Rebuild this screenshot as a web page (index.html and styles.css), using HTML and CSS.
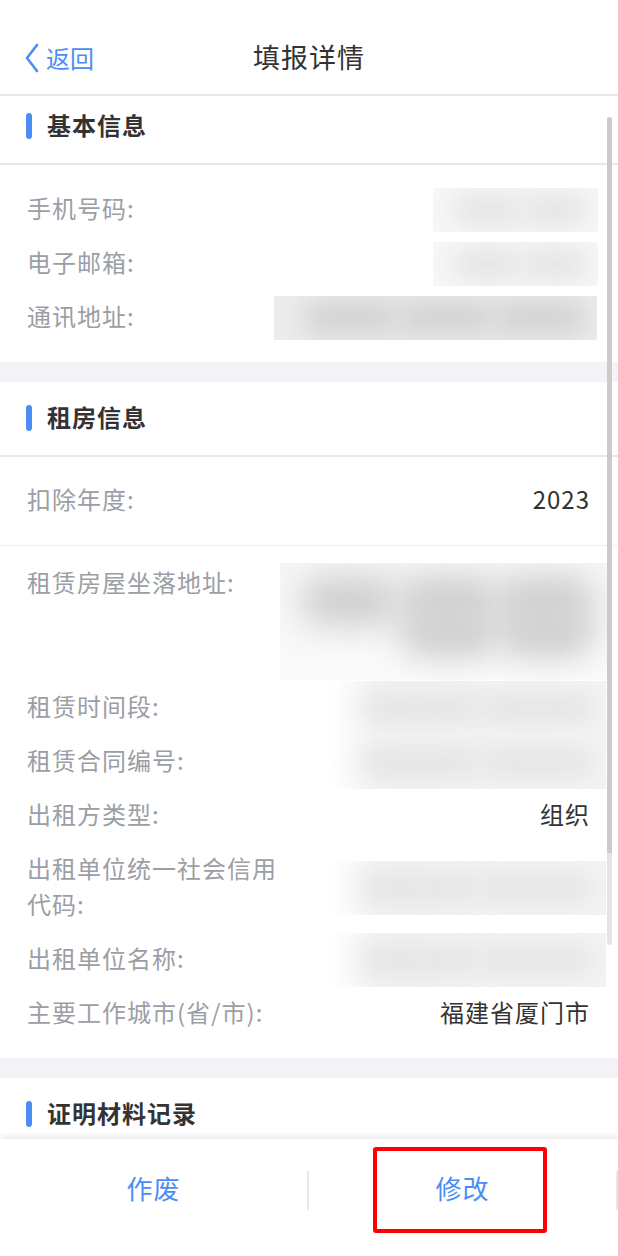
FILE: index.html
```html
<!DOCTYPE html>
<html lang="zh-CN">
  <head>
    <meta charset="UTF-8" />
    <meta name="viewport" content="width=device-width, initial-scale=1.0" />
    <title>填报详情</title>
    <link rel="stylesheet" href="styles.css">
  </head>
  <body>
    <header class="nav">
      <a href="#" class="back">
        <svg class="chevron" width="16" height="30" viewBox="0 0 16 30">
          <path d="M13 2 L3 15 L13 28" fill="none" stroke="#4b8df5" stroke-width="2.6" stroke-linecap="round" stroke-linejoin="round" />
        </svg>
        <span>返回</span>
      </a>
      <h1 class="nav-title">填报详情</h1>
    </header>

    <main class="content">
      <div class="scroll-inner">
        <section class="card">
          <div class="card-head"><span class="bar"></span>基本信息</div>
          <div class="card-body basic">
            <div class="row">
              <span class="label">手机号码:</span>
              <div class="mask short"><i></i><i></i></div>
            </div>
            <div class="row">
              <span class="label">电子邮箱:</span>
              <div class="mask short"><i></i><i></i></div>
            </div>
            <div class="row">
              <span class="label">通讯地址:</span>
              <div class="mask long"><i></i><i></i><i></i></div>
            </div>
          </div>
        </section>

        <div class="gap"></div>

        <section class="card">
          <div class="card-head"><span class="bar"></span>租房信息</div>
          <div class="row year-row">
            <span class="label">扣除年度:</span>
            <span class="value">2023</span>
          </div>
          <div class="card-body rent">
            <div class="row">
              <span class="label">租赁房屋坐落地址:</span>
              <div class="mask big">
                <div class="line"><i></i><i></i><i></i></div>
                <div class="line second"><i></i><i></i></div>
              </div>
            </div>
            <div class="row">
              <span class="label">租赁时间段:</span>
              <div class="mask wide"><i></i><i></i></div>
            </div>
            <div class="row">
              <span class="label">租赁合同编号:</span>
              <div class="mask wide"><i></i><i></i></div>
            </div>
            <div class="row">
              <span class="label">出租方类型:</span>
              <span class="value">组织</span>
            </div>
            <div class="row">
              <span class="label">出租单位统一社会信用代码:</span>
              <div class="mask wide"><i></i><i></i></div>
            </div>
            <div class="row">
              <span class="label">出租单位名称:</span>
              <div class="mask wide"><i></i><i></i></div>
            </div>
            <div class="row">
              <span class="label">主要工作城市(省/市):</span>
              <span class="value">福建省厦门市</span>
            </div>
          </div>
        </section>

        <div class="gap"></div>

        <section class="card">
          <div class="card-head"><span class="bar"></span>证明材料记录</div>
        </section>
      </div>
      <div class="scrollbar"></div>
    </main>

    <footer class="actions">
      <button class="action">作废</button>
      <span class="sep"></span>
      <button class="action">修改</button>
      <span class="sep"></span>
      <div class="highlight"></div>
    </footer>
  </body>
</html>
```

FILE: styles.css
```css
* {
  box-sizing: border-box;
}

body {
  font-family: 'Noto Sans CJK SC', 'Noto Sans', sans-serif;
  background-color: #fff;
  margin: 0;
  padding: 0;
  width: 618px;
  height: 1256px;
  display: flex;
  flex-direction: column;
  overflow: hidden;
}

.nav {
  position: relative;
  height: 96px;
  padding-top: 39px;
  border-bottom: 2px solid #e6e7eb;
  display: flex;
  justify-content: center;
  flex-shrink: 0;
}

.back {
  position: absolute;
  left: 24px;
  top: 43px;
  display: flex;
  align-items: center;
  gap: 6px;
  color: #4b8df5;
  font-size: 24px;
  line-height: 28px;
  text-decoration: none;
}

.nav-title {
  margin: 0;
  font-size: 27px;
  line-height: 36px;
  font-weight: 400;
  letter-spacing: 1px;
  color: #333;
}

.content {
  position: relative;
  flex: 1;
  overflow: hidden;
}

.scroll-inner {
  margin-top: -6px;
}

.card-head {
  display: flex;
  align-items: center;
  height: 75px;
  padding: 0 0 4px 26px;
  border-bottom: 2px solid #e6e7eb;
  font-size: 24px;
  font-weight: 700;
  letter-spacing: 1px;
  color: #333;
}

.bar {
  width: 6px;
  height: 26px;
  border-radius: 3px;
  background-color: #4b8df5;
  margin: 2px 15px 0 0;
}

.card-body.basic {
  padding: 18px 0 17px;
}

.card-body.rent {
  padding: 11px 0 17px;
}

.row {
  display: flex;
  align-items: center;
  min-height: 54px;
  padding: 0 28px 0 27px;
}

.label {
  flex: 0 1 250px;
  align-self: flex-start;
  padding: 7px 0 11px;
  font-size: 24px;
  line-height: 36px;
  letter-spacing: 1px;
  color: #9b9ea5;
}

.value {
  margin-left: auto;
  padding-bottom: 4px;
  font-size: 24px;
  line-height: 36px;
  letter-spacing: 1px;
  color: #333;
}

.year-row {
  height: 89px;
  border-bottom: 1px solid #eeeff2;
}

.year-row .label {
  align-self: center;
}

.gap {
  height: 20px;
  background-color: #f3f4f7;
}

/* blurred private values */
.mask {
  flex-shrink: 0;
  margin-left: auto;
  display: flex;
  align-items: center;
  padding: 0 10px 0 20px;
  background-color: #f7f7f7;
  overflow: hidden;
}

.mask i {
  flex: 1;
  height: 30px;
  border-radius: 15px;
  background-color: #e3e3e3;
  filter: blur(13px);
}

.mask.short {
  width: 165px;
  height: 44px;
  margin-right: -8px;
}

.mask.long {
  width: 323px;
  height: 44px;
  margin-right: -7px;
  padding-left: 30px;
  background-color: #ececec;
}

.mask.long i {
  height: 34px;
  background-color: #d2d2d2;
}

.mask.wide {
  width: 276px;
  height: 54px;
  margin-right: -16px;
  padding-left: 30px;
  background: linear-gradient(to right, #fff, #f3f3f3 18%, #f4f4f4);
}

.mask.wide i {
  background-color: #e4e4e4;
}

.mask.big {
  width: 328px;
  height: 117px;
  margin: 6px -18px 1px auto;
  flex-direction: column;
  align-items: stretch;
  justify-content: center;
  padding: 0 14px 10px 20px;
  background: linear-gradient(to bottom, #f6f6f6, #f8f8f8 60%, #fbfbfb);
}

.mask.big .line {
  display: flex;
}

.mask.big .line.second {
  margin: -18px 0 0 100px;
}

.mask.big i {
  height: 50px;
  border-radius: 25px;
  background-color: #d0d0d0;
  filter: blur(16px);
}

.scrollbar {
  position: absolute;
  top: 21px;
  right: 6px;
  width: 5px;
  height: 828px;
  border-radius: 3px;
  background: linear-gradient(#cbcbcb 0 736px, #e4e4e4 736px);
}

.actions {
  position: relative;
  flex-shrink: 0;
  height: 117px;
  padding: 12px 0 27px;
  display: flex;
  align-items: center;
  background-color: #fff;
  box-shadow: 0 -3px 6px rgba(0, 0, 0, 0.08);
}

.action {
  flex: 0 0 307px;
  height: 78px;
  border: none;
  background: none;
  padding: 0 0 6px;
  font-family: inherit;
  font-size: 26px;
  letter-spacing: 1px;
  color: #4b8df5;
  cursor: pointer;
}

.sep {
  width: 2px;
  height: 39px;
  background-color: #e8e8ea;
}

.highlight {
  position: absolute;
  left: 373px;
  top: 8px;
  width: 174px;
  height: 86px;
  border: 4px solid #ff0000;
  border-radius: 3px;
}
```
